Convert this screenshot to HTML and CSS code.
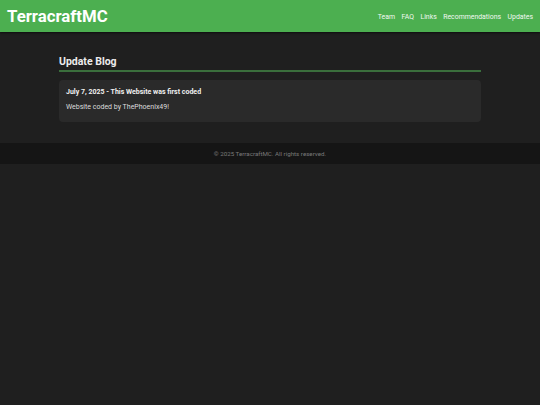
FILE: index.html
```html
<!DOCTYPE html>
<html lang="en">
<head>
<meta charset="utf-8">
<title>TerracraftMC - Updates</title>
<link rel="stylesheet" href="styles.css">
</head>
<body>
<header class="site-header">
  <div class="logo">TerracraftMC</div>
  <nav class="nav">
    <a href="#">Team</a>
    <a href="#">FAQ</a>
    <a href="#">Links</a>
    <a href="#">Recommendations</a>
    <a href="#">Updates</a>
  </nav>
</header>
<main class="main">
  <h2 class="section-title">Update Blog</h2>
  <article class="post">
    <h3 class="post-title">July 7, 2025 - This Website was first coded</h3>
    <p class="post-body">Website coded by ThePhoenix49!</p>
  </article>
</main>
<footer class="site-footer">© 2025 TerracraftMC. All rights reserved.</footer>
</body>
</html>
```
FILE: styles.css
```css
html, body {
  margin: 0;
  padding: 0;
}
body {
  background: #1f1f1f;
  color: #e6e6e6;
  font-family: Roboto, "Liberation Sans", sans-serif;
}
.site-header {
  background: #4caf50;
  height: 32px;
  display: flex;
  align-items: center;
  justify-content: space-between;
  padding: 0 7px;
  box-shadow: 0 1px 2px rgba(0,0,0,0.6);
  position: relative;
}
.logo {
  font-size: 16.8px;
  font-weight: 700;
  color: #ffffff;
}
.nav {
  display: flex;
  gap: 6.5px;
  padding-top: 1px;
}
.nav a {
  color: #f1f8f1;
  text-decoration: none;
  font-size: 6.9px;
}
.main {
  max-width: 422px;
  margin: 0 auto;
  padding: 23px 0 21px;
}
.section-title {
  margin: 0 0 8px;
  font-size: 10.5px;
  font-weight: 700;
  color: #ececec;
  padding-bottom: 2px;
  border-bottom: 2px solid #3a6e3c;
}
.post {
  background: #2a2a2a;
  border-radius: 4px;
  padding: 8px 7px 11px;
}
.post-title {
  margin: 0 0 7px;
  font-size: 7px;
  font-weight: 700;
  color: #f0f0f0;
}
.post-body {
  margin: 0;
  font-size: 7px;
  color: #dcdcdc;
}
.site-footer {
  background: #151515;
  height: 21px;
  display: flex;
  align-items: center;
  justify-content: center;
  font-size: 6.2px;
  color: #7a7a7a;
}
```
